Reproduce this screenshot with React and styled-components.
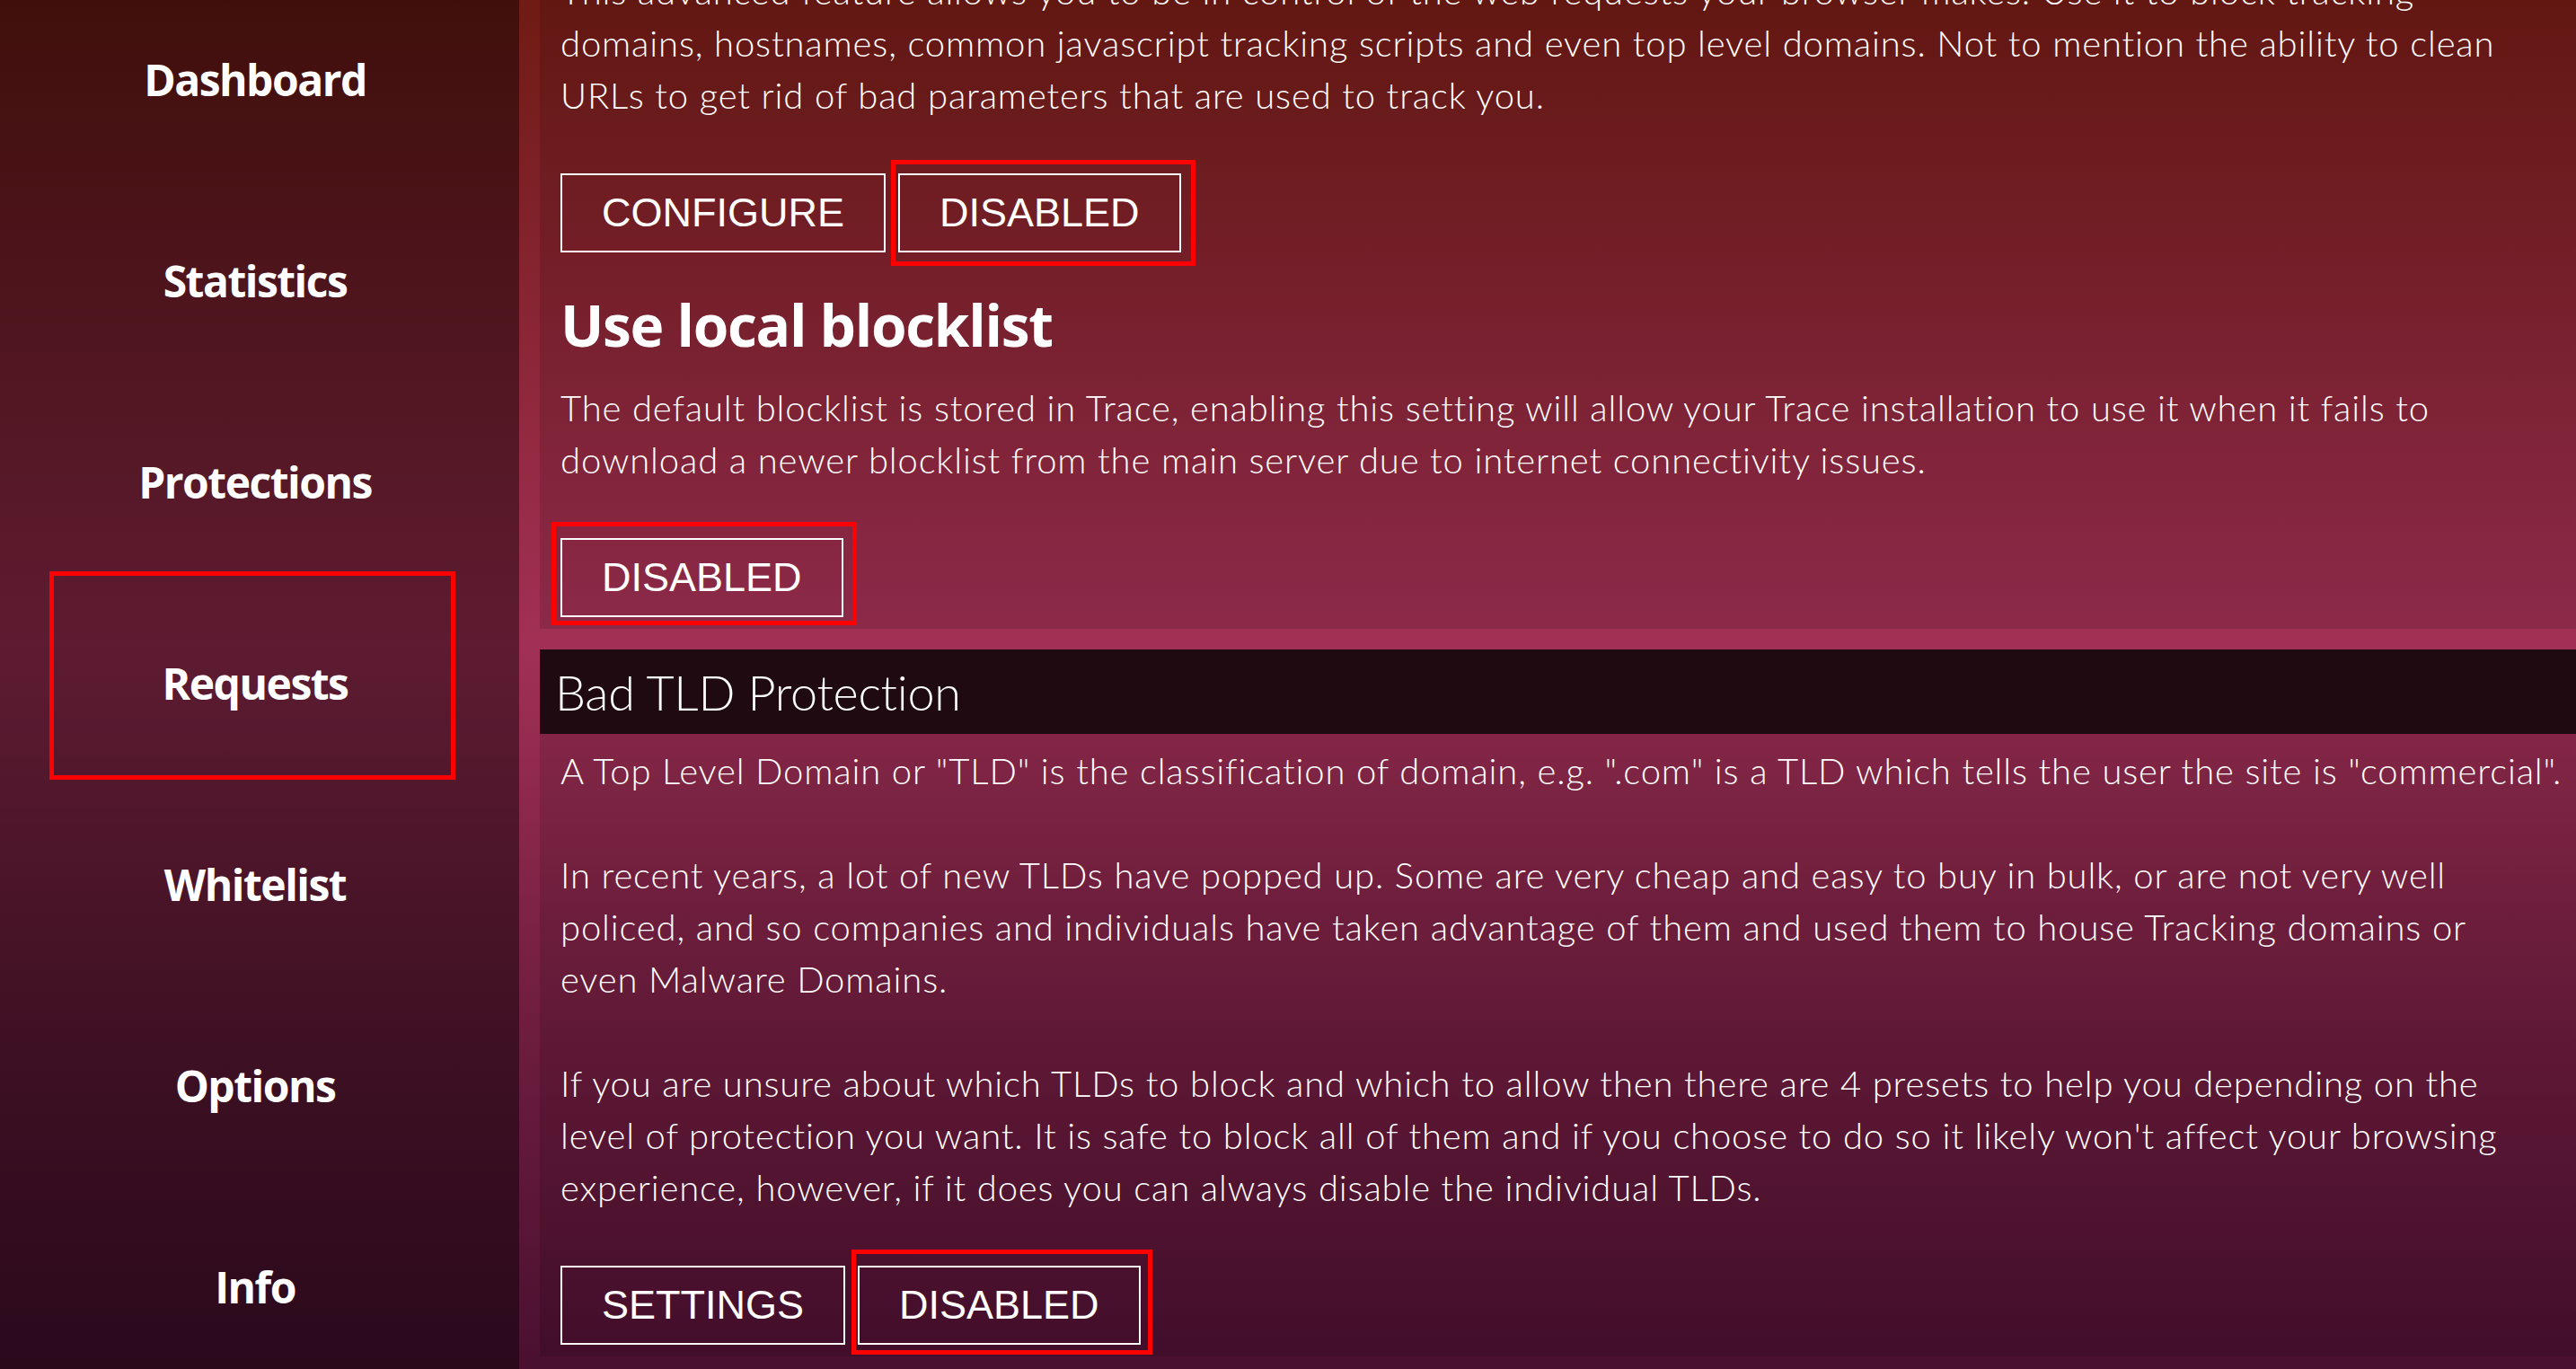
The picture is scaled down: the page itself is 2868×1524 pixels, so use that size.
import React from 'react';
import styled, { createGlobalStyle, css } from 'styled-components';

const GlobalStyle = createGlobalStyle`
  html, body {
    margin: 0;
    padding: 0;
    height: 100%;
    overflow: hidden;
  }
  body {
    font-family: Lato, "Open Sans", sans-serif;
    color: #fff;
  }
`

// red annotation frame drawn around a highlighted element
const marker = ([top, right, bottom, left]) => css`
  &::after {
    content: "";
    position: absolute;
    top: ${top}px;
    right: ${right}px;
    bottom: ${bottom}px;
    left: ${left}px;
    border: 5px solid #ff0000;
    pointer-events: none;
  }
`

const Page = styled.div`
  display: flex;
  width: 100%;
  height: 100vh;
  overflow: hidden;
  background: linear-gradient(to bottom, #701b14 0%, #a23056 47%, #6e1d3e 75%, #4a1030 100%);
`

const Sidebar = styled.nav`
  flex: 0 0 578px;
  background: rgba(0, 0, 0, 0.42);
  overflow: hidden;
`

const NavList = styled.div`
  display: flex;
  flex-direction: column;
  margin-top: -24px;
  padding-right: 10px;
`

const NavItem = styled.a`
  position: relative;
  flex: 0 0 224px;
  display: flex;
  align-items: center;
  justify-content: center;
  font-family: "Open Sans", sans-serif;
  font-weight: 700;
  font-size: 48px;
  letter-spacing: -1.5px;
  color: #fff;
  text-decoration: none;
  ${p => p.$mark && marker(p.$mark)}
`

const Main = styled.main`
  flex: 1;
  min-width: 0;
  padding-left: 23px;
  overflow: hidden;
`

const Column = styled.div`
  display: flex;
  flex-direction: column;
  margin-top: -39px;
`

const Section = styled.section`
  margin-bottom: 23px;
`

const SectionHeader = styled.h2`
  margin: 0;
  height: 94px;
  padding-left: 17px;
  background: #1f0a12;
  font-family: Lato, sans-serif;
  font-weight: 300;
  font-size: 54px;
  line-height: 96px;
  letter-spacing: -0.3px;
  white-space: nowrap;
`

const SectionBody = styled.div`
  padding: ${p => p.$top || 0}px 23px 13px 23px;
  background: rgba(0, 0, 0, 0.12);
`

const Text = styled.p`
  margin: 0;
  font-family: Lato, sans-serif;
  font-weight: 300;
  font-size: 40px;
  line-height: 58px;
  letter-spacing: 0.85px;
  white-space: nowrap;
  & + & {
    margin-top: 58px;
  }
`

const Heading = styled.h3`
  margin: 37px 0 20px;
  font-family: "Open Sans", sans-serif;
  font-weight: 700;
  font-size: 64px;
  line-height: 87px;
  letter-spacing: -1.3px;
`

const ButtonRow = styled.div`
  display: flex;
  gap: 14px;
  margin-top: 58px;
`

const Button = styled.button`
  position: relative;
  box-sizing: border-box;
  height: 88px;
  padding: 0 44px;
  border: 2px solid #fff;
  border-radius: 0;
  background: transparent;
  color: #fff;
  font-family: "Liberation Sans", Arial, sans-serif;
  font-size: 45px;
  ${p => p.$mark && marker(p.$mark)}
`

const navItems = ['Dashboard', 'Statistics', 'Protections', 'Requests', 'Whitelist', 'Options', 'Info']

const App = () => {
  return (
    <>
      <GlobalStyle />
      <Page>
        <Sidebar>
          <NavList>
            {navItems.map(item => (
              <NavItem key={item} href="#" $mark={item === 'Requests' ? [-12, 61, 4, 55] : null}>{item}</NavItem>
            ))}
          </NavList>
        </Sidebar>
        <Main>
          <Column>
            <Section>
              <SectionBody>
                <Text>
                  This advanced feature allows you to be in control of the web requests your browser makes. Use it to block tracking<br />
                  domains, hostnames, common javascript tracking scripts and even top level domains. Not to mention the ability to clean<br />
                  URLs to get rid of bad parameters that are used to track you.
                </Text>
                <ButtonRow>
                  <Button>CONFIGURE</Button>
                  <Button $mark={[-17, -18, -17, -10]}>DISABLED</Button>
                </ButtonRow>
                <Heading>Use local blocklist</Heading>
                <Text>
                  The default blocklist is stored in Trace, enabling this setting will allow your Trace installation to use it when it fails to<br />
                  download a newer blocklist from the main server due to internet connectivity issues.
                </Text>
                <ButtonRow>
                  <Button $mark={[-20, -17, -11, -12]}>DISABLED</Button>
                </ButtonRow>
              </SectionBody>
            </Section>
            <Section>
              <SectionHeader>Bad TLD Protection</SectionHeader>
              <SectionBody $top={12}>
                <Text>
                  A Top Level Domain or "TLD" is the classification of domain, e.g. ".com" is a TLD which tells the user the site is "commercial".
                </Text>
                <Text>
                  In recent years, a lot of new TLDs have popped up. Some are very cheap and easy to buy in bulk, or are not very well<br />
                  policed, and so companies and individuals have taken advantage of them and used them to house Tracking domains or<br />
                  even Malware Domains.
                </Text>
                <Text>
                  If you are unsure about which TLDs to block and which to allow then there are 4 presets to help you depending on the<br />
                  level of protection you want. It is safe to block all of them and if you choose to do so it likely won't affect your browsing<br />
                  experience, however, if it does you can always disable the individual TLDs.
                </Text>
                <ButtonRow>
                  <Button>SETTINGS</Button>
                  <Button $mark={[-20, -15, -13, -9]}>DISABLED</Button>
                </ButtonRow>
              </SectionBody>
            </Section>
          </Column>
        </Main>
      </Page>
    </>
  )
}

export default App;
